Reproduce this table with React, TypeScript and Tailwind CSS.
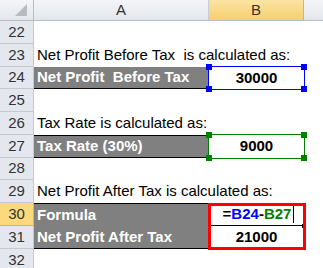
import React from 'react'

type Row = {
  n: number
  h: number
  a?: React.ReactNode
  b?: React.ReactNode
  dark?: boolean
  topLine?: boolean
  bottomLine?: boolean
  active?: boolean
}

const font = { fontFamily: '"Liberation Sans", Arial, sans-serif' }

function Corners({ color }: { color: string }) {
  const sq = `absolute w-[6px] h-[6px] ${color}`
  return (
    <>
      <span className={`${sq} -left-[3px] -top-[3px]`} />
      <span className={`${sq} -right-[3px] -top-[3px]`} />
      <span className={`${sq} -left-[3px] -bottom-[3px]`} />
      <span className={`${sq} -right-[3px] -bottom-[3px]`} />
    </>
  )
}

const rows: Row[] = [
  { n: 22, h: 23 },
  { n: 23, h: 23, a: <span className="text-black">Net Profit Before Tax  is calculated as:</span> },
  { n: 24, h: 22, a: <span className="font-bold text-white">Net Profit  Before Tax</span>, b: '30000', dark: true, bottomLine: true },
  { n: 25, h: 23 },
  { n: 26, h: 23, a: <span className="text-black">Tax Rate is calculated as:</span> },
  { n: 27, h: 23, a: <span className="font-bold text-white">Tax Rate (30%)</span>, b: '9000', dark: true, topLine: true, bottomLine: true },
  { n: 28, h: 22 },
  { n: 29, h: 23, a: <span className="text-black">Net Profit After Tax is calculated as:</span> },
  { n: 30, h: 23, a: <span className="font-bold text-white">Formula</span>, dark: true, topLine: true, active: true },
  { n: 31, h: 23, a: <span className="font-bold text-white">Net Profit After Tax</span>, b: '21000', dark: true, bottomLine: true },
  { n: 32, h: 23 },
]

export default function App() {
  return (
    <div className="w-[323px] h-[268px] overflow-hidden bg-white text-[15px]" style={font}>
      {/* column headers */}
      <div className="flex h-[21px] border-b border-[#b7bdc6] bg-gradient-to-b from-[#f3f5f8] to-[#e3e7ec]">
        <div className="w-[34px] border-r border-[#b7bdc6] relative">
          <span className="absolute right-[6px] bottom-[4px] w-0 h-0 border-l-[12px] border-l-transparent border-b-[12px] border-b-[#b8bcc2]" />
        </div>
        <div className="w-[175px] border-r border-[#c7ccd3] flex items-center justify-center text-[#333]">A</div>
        <div className="w-[95px] border-r border-[#e2b64f] flex items-center justify-center text-[#333] bg-gradient-to-b from-[#fbe4a3] to-[#f7cf6c]">B</div>
        <div className="flex-1" />
      </div>

      {rows.map((r) => (
        <div key={r.n} className="flex" style={{ height: r.h }}>
          <div
            className={`w-[34px] shrink-0 border-r border-b flex items-center justify-center text-[#333] ${
              r.active ? 'bg-[#fbd97c] border-[#e2b64f]' : 'bg-[#e4e8ee] border-[#c3c9d1]'
            }`}
          >
            {r.n}
          </div>
          <div
            className={`w-[175px] shrink-0 flex items-center pl-[3px] whitespace-pre ${r.dark ? 'bg-[#808080]' : ''} ${
              r.topLine ? 'border-t border-black' : ''
            } ${r.bottomLine ? 'border-b border-black' : ''}`}
          >
            {r.a}
          </div>
          <div className="w-[95px] shrink-0 relative flex items-center justify-center font-bold text-black">
            {r.n === 24 && (
              <div className="absolute -left-px -top-px -right-px -bottom-px border border-[#0000ff]">
                <Corners color="bg-[#0000ff]" />
              </div>
            )}
            {r.n === 27 && (
              <div className="absolute -left-px -top-px -right-px -bottom-px border border-[#008000]">
                <Corners color="bg-[#008000]" />
              </div>
            )}
            {r.n === 30 && (
              <>
                <span className="pl-[4px]">
                  <span>=</span>
                  <span className="text-[#0000ff]">B24</span>
                  <span>-</span>
                  <span className="text-[#008000]">B27</span>
                </span>
                <span className="inline-block w-px h-[17px] bg-black ml-[2px]" />
                <span className="absolute left-[2px] right-0 bottom-0 h-px bg-black" />
                <span className="absolute -right-[2px] -bottom-[2px] w-[4px] h-[4px] bg-black" />
                <div className="absolute -left-[1px] top-0 -right-[2px] h-[47px] border-[3px] border-[#ff0000]" />
              </>
            )}
            {r.b && r.n !== 30 && <span>{r.b}</span>}
          </div>
          <div className="flex-1" />
        </div>
      ))}
    </div>
  )
}
